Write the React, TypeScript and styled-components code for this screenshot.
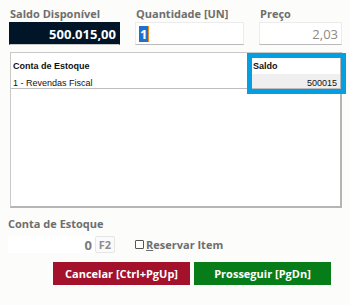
import styled, { createGlobalStyle } from 'styled-components';

const GlobalStyle = createGlobalStyle`
  body {
    margin: 0;
    background: #fcfcfa;
    font-family: "Open Sans", "Liberation Sans", sans-serif;
  }
`;

const Page = styled.div`
  width: 350px;
  height: 305px;
  box-sizing: border-box;
  padding: 6px 8px 0 9px;
  display: flex;
  flex-direction: column;
`;

const TopRow = styled.div`
  display: grid;
  grid-template-columns: 111px 109px 83px;
  column-gap: 15px;
`;

const Field = styled.div`
  display: flex;
  flex-direction: column;
`;

const Label = styled.label<{ $indent?: number }>`
  font-size: 11px;
  font-weight: 700;
  color: #6e6e6e;
  height: 16px;
  line-height: 15px;
  padding-left: ${p => p.$indent ?? 1}px;
`;

const ValueBox = styled.div<{ $dark?: boolean; $align?: string }>`
  height: 23px;
  box-sizing: border-box;
  display: flex;
  align-items: center;
  justify-content: ${p => p.$align ?? 'flex-end'};
  padding: 0 3px;
  background: ${p => (p.$dark ? '#001528' : '#ffffff')};
  border: 1px solid ${p => (p.$dark ? '#001528' : '#ececec')};
  border-bottom: 1px solid ${p => (p.$dark ? '#c8c8c8' : '#b9b9b9')};
  color: ${p => (p.$dark ? '#ffffff' : '#8a8a8a')};
  font-size: 13px;
  font-weight: ${p => (p.$dark ? 700 : 400)};
`;

const Selected = styled.span`
  background: #1e70d0;
  color: #fff;
  font-weight: 700;
  font-size: 13px;
  line-height: 16px;
  padding: 0 1px;
  border-right: 1px solid #f08a1c;
`;

const GridWrap = styled.div`
  position: relative;
  margin-top: 7px;
  margin-left: 1px;
  width: 332px;
  height: 156px;
  box-sizing: border-box;
  border: 1px solid #c9c9c9;
  border-right: 2px solid #b5b5b5;
  border-bottom: 2px solid #b5b5b5;
  background: #fff;
  font-family: "Liberation Sans", "DejaVu Sans", sans-serif;
`;

const GridRow = styled.div<{ $line?: boolean }>`
  display: grid;
  grid-template-columns: 1fr 89px;
  border-bottom: ${p => (p.$line ? '1px solid #bdbdbd' : 'none')};
`;

const Cell = styled.div<{ $head?: boolean; $right?: boolean; $focus?: boolean }>`
  height: ${p => (p.$head ? 21 : 14)}px;
  line-height: ${p => (p.$head ? 26 : 18)}px;
  padding: 0 3px 0 2px;
  font-size: 9px;
  font-weight: ${p => (p.$head ? 700 : 400)};
  color: #111;
  text-align: ${p => (p.$right ? 'right' : 'left')};
  background: ${p => (p.$focus ? '#efefef' : 'transparent')};
  white-space: nowrap;
  overflow: hidden;
`;

const FocusFrame = styled.div`
  position: absolute;
  left: 236px;
  top: 0px;
  width: 99px;
  height: 41px;
  box-sizing: border-box;
  border: 5px solid #049fe0;
  pointer-events: none;
`;

const Bottom = styled.div`
  margin-top: 8px;
  margin-left: -1px;
  display: flex;
  flex-direction: column;
`;

const StockRow = styled.div`
  display: flex;
  align-items: center;
  margin-top: 4px;
`;

const StockInput = styled.div`
  width: 87px;
  height: 17px;
  background: #fff;
  display: flex;
  align-items: center;
  justify-content: flex-end;
  padding-right: 3px;
  box-sizing: border-box;
  color: #7a7a7a;
  font-weight: 700;
  font-size: 13px;
`;

const KeyButton = styled.div`
  width: 20px;
  height: 17px;
  box-sizing: border-box;
  border: 1px solid #e6e6e6;
  border-radius: 2px;
  background: #fafafa;
  color: #8c8c8c;
  font-size: 11px;
  font-weight: 700;
  display: flex;
  align-items: center;
  justify-content: center;
`;

const CheckLabel = styled.label`
  display: flex;
  align-items: center;
  margin-left: 20px;
  margin-top: -1px;
  font-size: 11px;
  font-weight: 700;
  color: #6e6e6e;
  gap: 2px;
  u {
    text-decoration: underline;
  }
`;

const Box = styled.span`
  width: 7px;
  height: 7px;
  border: 1px solid #555;
  border-radius: 1px;
  background: #fff;
`;

const Actions = styled.div`
  display: flex;
  gap: 4px;
  margin-top: 9px;
  padding-left: 44px;
`;

const ActionButton = styled.button<{ $tone: 'red' | 'green' }>`
  width: 137px;
  height: 23px;
  border: none;
  margin: 0;
  padding: 0;
  background: ${p => (p.$tone === 'red' ? '#a3112a' : '#077d19')};
  color: #fff;
  font-family: "Open Sans", "Liberation Sans", sans-serif;
  font-size: 11px;
  font-weight: 700;
  cursor: pointer;
`;

const App = () => {
  return (
    <>
      <GlobalStyle />
      <Page>
        <TopRow>
          <Field>
            <Label>Saldo Disponível</Label>
            <ValueBox $dark>500.015,00</ValueBox>
          </Field>
          <Field>
            <Label>Quantidade [UN]</Label>
            <ValueBox $align="flex-start">
              <Selected>1</Selected>
            </ValueBox>
          </Field>
          <Field>
            <Label>Preço</Label>
            <ValueBox>2,03</ValueBox>
          </Field>
        </TopRow>

        <GridWrap>
          <GridRow>
            <Cell $head>Conta de Estoque</Cell>
            <Cell $head>Saldo</Cell>
          </GridRow>
          <GridRow $line>
            <Cell>1 - Revendas Fiscal</Cell>
            <Cell $right $focus>500015</Cell>
          </GridRow>
          <FocusFrame />
        </GridWrap>

        <Bottom>
          <Label $indent={0}>Conta de Estoque</Label>
          <StockRow>
            <StockInput>0</StockInput>
            <KeyButton>F2</KeyButton>
            <CheckLabel>
              <Box />
              <span><u>R</u>eservar Item</span>
            </CheckLabel>
          </StockRow>
        </Bottom>

        <Actions>
          <ActionButton $tone="red">Cancelar [Ctrl+PgUp]</ActionButton>
          <ActionButton $tone="green">Prosseguir [PgDn]</ActionButton>
        </Actions>
      </Page>
    </>
  );
};

export default App;
